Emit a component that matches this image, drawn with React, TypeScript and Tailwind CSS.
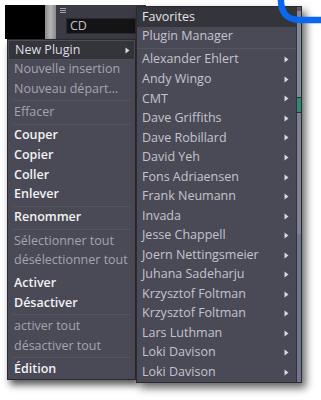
import React from "react";

const Arrow = () => (
  <svg width="5" height="7" viewBox="0 0 5 7" className="shrink-0">
    <path d="M0.5 0.5 L4.5 3.5 L0.5 6.5 Z" fill="#d8d8de" />
  </svg>
);

type MainItem =
  | { t: "sep"; hidden?: boolean }
  | { t: "item"; label: string; kind: "hl" | "dim" | "bold" };

const mainItems: MainItem[] = [
  { t: "item", label: "New Plugin", kind: "hl" },
  { t: "item", label: "Nouvelle insertion", kind: "dim" },
  { t: "item", label: "Nouveau départ...", kind: "dim" },
  { t: "sep" },
  { t: "item", label: "Effacer", kind: "dim" },
  { t: "sep" },
  { t: "item", label: "Couper", kind: "bold" },
  { t: "item", label: "Copier", kind: "bold" },
  { t: "item", label: "Coller", kind: "bold" },
  { t: "item", label: "Enlever", kind: "bold" },
  { t: "sep" },
  { t: "item", label: "Renommer", kind: "bold" },
  { t: "sep" },
  { t: "item", label: "Sélectionner tout", kind: "dim" },
  { t: "item", label: "désélectionner tout", kind: "dim" },
  { t: "sep", hidden: true },
  { t: "item", label: "Activer", kind: "bold" },
  { t: "item", label: "Désactiver", kind: "bold" },
  { t: "sep" },
  { t: "item", label: "activer tout", kind: "dim" },
  { t: "item", label: "désactiver tout", kind: "dim" },
  { t: "sep" },
  { t: "item", label: "Édition", kind: "bold" },
];

const authors = [
  "Alexander Ehlert",
  "Andy Wingo",
  "CMT",
  "Dave Griffiths",
  "Dave Robillard",
  "David Yeh",
  "Fons Adriaensen",
  "Frank Neumann",
  "Invada",
  "Jesse Chappell",
  "Joern Nettingsmeier",
  "Juhana Sadeharju",
  "Krzysztof Foltman",
  "Krzysztof Foltman",
  "Lars Luthman",
  "Loki Davison",
  "Loki Davison",
];

export default function App() {
  return (
    <div
      className="relative w-[321px] h-[400px] bg-white overflow-hidden text-[12.5px]"
      style={{ fontFamily: "'Open Sans', 'Noto Sans', sans-serif" }}
    >
      {/* background window */}
      <div className="flex pt-[5px] pl-[5px] h-[45px]">
        <div className="w-[40px] h-[34px] bg-black" />
        <div className="w-[11px] h-[40px] bg-gradient-to-r from-[#8c8c8c] via-[#b4b4b4] to-[#8a8a8a]" />
        <div className="w-[90px] h-[40px] bg-[#3b3b45] flex flex-col pl-[4px]">
          <div className="h-[12px] flex flex-col gap-[1px] pt-[3px]">
            <div className="w-[6px] h-[1px] bg-[#a0a0a8]" />
            <div className="w-[6px] h-[1px] bg-[#a0a0a8]" />
            <div className="w-[6px] h-[1px] bg-[#a0a0a8]" />
          </div>
          <div className="ml-[6px] mt-[1px] w-[70px] h-[16px] bg-[#141416] border border-[#2a2a2e] text-[#c0c0c4] text-[12.5px] leading-[14px] pl-[3px]">
            CD
          </div>
        </div>
      </div>

      {/* main context menu */}
      <div className="absolute left-[7px] top-[39px] w-[129px] bg-[#4a4a57] border border-[#2a2a30] shadow-[3px_5px_7px_rgba(0,0,0,0.65)] flex flex-col">
        {mainItems.map((it, i) =>
          it.t === "sep" ? (
            <div key={i} className="h-[3.6px] flex items-center px-[5px]">
              {!it.hidden && <div className="w-full h-[1px] bg-[#55555f]" />}
            </div>
          ) : it.kind === "hl" ? (
            <div
              key={i}
              className="h-[20px] flex items-center justify-between pl-[6px] pr-[4px] bg-[#34343b] border border-[#4e4e58] text-[#dedee2]"
            >
              <span>{it.label}</span>
              <Arrow />
            </div>
          ) : (
            <div
              key={i}
              className={
                "h-[19.6px] flex items-center pl-[6px] whitespace-nowrap " +
                (it.kind === "bold"
                  ? "font-semibold text-[#f2f2f4]"
                  : "text-[#a4a4ae]")
              }
            >
              {it.label}
            </div>
          )
        )}
      </div>

      {/* submenu */}
      <div className="absolute left-[136px] top-[6px] w-[166px] h-[377px] bg-[#4a4a57] border border-[#2a2a30] shadow-[4px_5px_8px_rgba(0,0,0,0.6)] flex">
        <div className="flex-1 flex flex-col">
          <div className="h-[20px] flex items-center pl-[5px] bg-[#34343b] text-[#e4e4e8]">
            Favorites
          </div>
          <div className="h-[19.6px] flex items-center pl-[5px] text-[#c4c4cc]">
            Plugin Manager
          </div>
          <div className="h-[3.6px] flex items-center">
            <div className="w-full h-[1px] bg-[#55555f]" />
          </div>
          {authors.map((a, i) => (
            <div
              key={i}
              className="h-[19.6px] flex items-center justify-between pl-[5px] pr-[7px] text-[#c4c4cc] whitespace-nowrap"
            >
              <span>{a}</span>
              <Arrow />
            </div>
          ))}
        </div>
        {/* scrollbar */}
        <div className="w-[5px] flex flex-col bg-[#80889a] border-l border-[#33333b]">
          <div className="h-[4px] bg-[#5a5a66]" />
          <div className="h-[86px]" />
          <div className="h-[16px] bg-[#2e8a72] border-y border-[#1c3a34]" />
          <div className="h-[121px] bg-[#7c8294]" />
          <div className="flex-1 bg-[#6e7490]" />
        </div>
      </div>

      {/* blue annotation arc */}
      <svg
        className="absolute top-0 left-0"
        width="321"
        height="40"
        viewBox="0 0 321 40"
      >
        <path
          d="M281 -2 Q280 20 300 20 L323 20"
          fill="none"
          stroke="#0a68f0"
          strokeWidth="6.5"
        />
      </svg>
    </div>
  );
}
